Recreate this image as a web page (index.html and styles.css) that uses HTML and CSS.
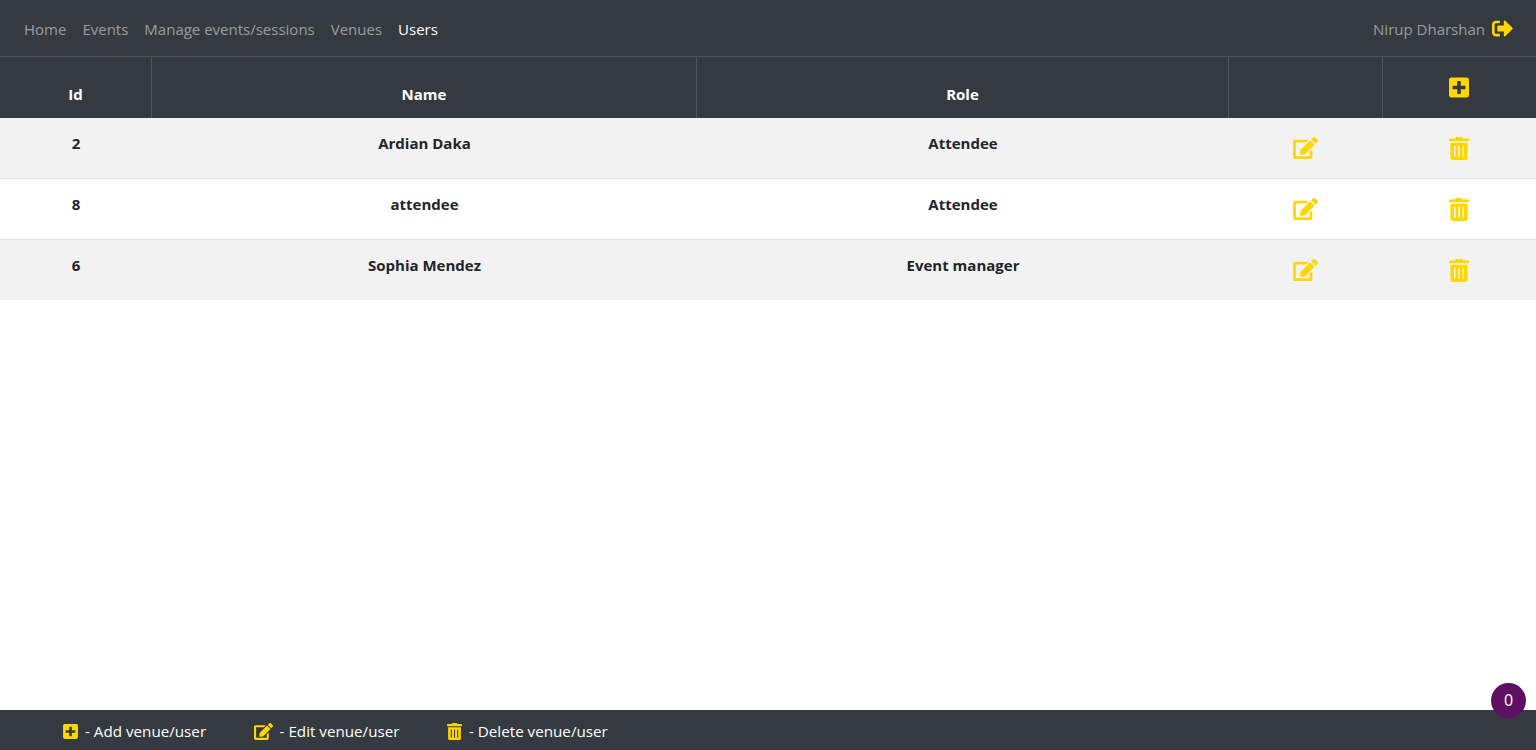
FILE: index.html
```html
<!DOCTYPE html>
<html lang="en">
<head>
    <meta charset="UTF-8">
    <meta name="viewport" content="width=device-width, initial-scale=1.0">
    <title>Users</title>
    <link rel="stylesheet" href="styles.css">
</head>
<body>
    <svg class="icon-defs" aria-hidden="true">
        <symbol id="i-add" viewBox="0 0 448 512"><path d="M400 32H48C21.5 32 0 53.5 0 80v352c0 26.5 21.5 48 48 48h352c26.5 0 48-21.5 48-48V80c0-26.5-21.5-48-48-48zm-32 252c0 6.6-5.4 12-12 12h-92v92c0 6.6-5.4 12-12 12h-56c-6.6 0-12-5.4-12-12v-92H92c-6.6 0-12-5.4-12-12v-56c0-6.6 5.4-12 12-12h92v-92c0-6.6 5.4-12 12-12h56c6.6 0 12 5.4 12 12v92h92c6.6 0 12 5.4 12 12v56z"/></symbol>
        <symbol id="i-edit" viewBox="0 0 576 512"><path d="M402.6 83.2l90.2 90.2c3.8 3.8 3.8 10 0 13.8L274.4 405.6l-92.8 10.3c-12.4 1.4-22.9-9.1-21.5-21.5l10.3-92.8L388.8 83.2c3.8-3.8 10-3.8 13.8 0zm162-22.9l-48.8-48.8c-15.2-15.2-39.9-15.2-55.2 0l-35.4 35.4c-3.8 3.8-3.8 10 0 13.8l90.2 90.2c3.8 3.8 10 3.8 13.8 0l35.4-35.4c15.2-15.3 15.2-40 0-55.2zM384 346.2V448H64V128h229.8c3.2 0 6.2-1.3 8.5-3.5l40-40c7.6-7.6 2.2-20.5-8.5-20.5H48C21.5 64 0 85.5 0 112v352c0 26.5 21.5 48 48 48h352c26.5 0 48-21.5 48-48V306.2c0-10.7-12.9-16-20.5-8.5l-40 40c-2.2 2.3-3.5 5.3-3.5 8.5z"/></symbol>
        <symbol id="i-trash" viewBox="0 0 448 512"><path d="M32 464a48 48 0 0 0 48 48h288a48 48 0 0 0 48-48V128H32zm272-256a16 16 0 0 1 32 0v224a16 16 0 0 1-32 0zm-96 0a16 16 0 0 1 32 0v224a16 16 0 0 1-32 0zm-96 0a16 16 0 0 1 32 0v224a16 16 0 0 1-32 0zM432 32H312l-9.4-18.7A24 24 0 0 0 281.1 0H166.8a23.72 23.72 0 0 0-21.4 13.3L136 32H16A16 16 0 0 0 0 48v32a16 16 0 0 0 16 16h416a16 16 0 0 0 16-16V48a16 16 0 0 0-16-16z"/></symbol>
        <symbol id="i-logout" viewBox="0 0 512 512"><path d="M497 273L329 441c-15 15-41 4.5-41-17v-96H152c-13.3 0-24-10.7-24-24v-96c0-13.3 10.7-24 24-24h136V88c0-21.4 25.9-32 41-17l168 168c9.3 9.4 9.3 24.6 0 34zM192 436v-40c0-6.6-5.4-12-12-12H96c-17.7 0-32-14.3-32-32V160c0-17.7 14.3-32 32-32h84c6.6 0 12-5.4 12-12V76c0-6.6-5.4-12-12-12H96c-53 0-96 43-96 96v192c0 53 43 96 96 96h84c6.6 0 12-5.4 12-12z"/></symbol>
    </svg>

    <nav class="navbar">
        <div class="nav-links">
            <a href="#">Home</a>
            <a href="#">Events</a>
            <a href="#">Manage events/sessions</a>
            <a href="#">Venues</a>
            <a href="#" class="active">Users</a>
        </div>
        <div class="nav-user">
            <span>Nirup Dharshan</span>
            <svg class="icon icon-logout"><use href="#i-logout"/></svg>
        </div>
    </nav>

    <main class="content">
        <table class="users">
            <colgroup>
                <col class="col-id">
                <col class="col-name">
                <col class="col-role">
                <col class="col-edit">
                <col class="col-delete">
            </colgroup>
            <thead>
                <tr>
                    <th>Id</th>
                    <th>Name</th>
                    <th>Role</th>
                    <th></th>
                    <th class="th-add"><svg class="icon icon-add"><use href="#i-add"/></svg></th>
                </tr>
            </thead>
            <tbody>
                <tr>
                    <td>2</td>
                    <td>Ardian Daka</td>
                    <td>Attendee</td>
                    <td><svg class="icon icon-edit"><use href="#i-edit"/></svg></td>
                    <td><svg class="icon icon-trash"><use href="#i-trash"/></svg></td>
                </tr>
                <tr>
                    <td>8</td>
                    <td>attendee</td>
                    <td>Attendee</td>
                    <td><svg class="icon icon-edit"><use href="#i-edit"/></svg></td>
                    <td><svg class="icon icon-trash"><use href="#i-trash"/></svg></td>
                </tr>
                <tr>
                    <td>6</td>
                    <td>Sophia Mendez</td>
                    <td>Event manager</td>
                    <td><svg class="icon icon-edit"><use href="#i-edit"/></svg></td>
                    <td><svg class="icon icon-trash"><use href="#i-trash"/></svg></td>
                </tr>
            </tbody>
        </table>
    </main>

    <footer class="legend">
        <div class="legend-item"><svg class="icon icon-small-add"><use href="#i-add"/></svg><span>- Add venue/user</span></div>
        <div class="legend-item"><svg class="icon icon-small-edit"><use href="#i-edit"/></svg><span>- Edit venue/user</span></div>
        <div class="legend-item"><svg class="icon icon-small-trash"><use href="#i-trash"/></svg><span>- Delete venue/user</span></div>
    </footer>

    <div class="badge">0</div>
</body>
</html>
```

FILE: styles.css
```css
html, body {
    height: 100%;
}
body {
    font-family: "Open Sans", "Noto Sans", sans-serif;
    font-size: 15px;
    line-height: 24px;
    color: #212529;
    background-color: #fff;
    margin: 0;
    display: flex;
    flex-direction: column;
    overflow: hidden;
}
.icon-defs {
    display: none;
}
.icon {
    fill: #ffd700;
    display: inline-block;
}

.navbar {
    height: 56px;
    flex: none;
    display: flex;
    align-items: center;
    justify-content: space-between;
    padding: 2px 23px 0 24px;
    box-sizing: border-box;
    background-color: #343a40;
}
.nav-links {
    display: flex;
    gap: 16px;
}
.nav-links a {
    color: rgba(255, 255, 255, 0.5);
    text-decoration: none;
}
.nav-links a.active {
    color: #fff;
}
.nav-user {
    display: flex;
    align-items: center;
    gap: 7px;
    color: rgba(255, 255, 255, 0.5);
}
.icon-logout {
    width: 21px;
    height: 21px;
    margin-top: -2px;
}

.content {
    flex: 1;
}
.users {
    width: 100%;
    table-layout: fixed;
    border-collapse: separate;
    border-spacing: 0;
}
.col-id { width: 152px; }
.col-name { width: 545px; }
.col-role { width: 532px; }
.col-edit { width: 154px; }
.users th {
    height: 62px;
    box-sizing: border-box;
    padding: 12px;
    text-align: center;
    vertical-align: bottom;
    font-weight: 700;
    color: #fff;
    background-color: #343a40;
    border-top: 1px solid #50565c;
    border-right: 1px solid #50565c;
}
.users th:last-child {
    border-right: 0;
}
.users .th-add {
    vertical-align: top;
    padding-top: 19px;
    line-height: 0;
}
.icon-add {
    width: 20px;
    height: 23px;
    margin-right: 2px;
}
.users td {
    height: 61px;
    box-sizing: border-box;
    padding: 13px 12px 0;
    text-align: center;
    vertical-align: top;
    font-weight: 700;
    border-bottom: 1px solid #dee2e6;
}
.users tbody tr:last-child td {
    height: 60px;
    border-bottom: 0;
}
.users tbody tr:nth-child(odd) {
    background-color: #f2f2f2;
}
.icon-edit {
    width: 25px;
    height: 22px;
    margin: 6px 2px 0 0;
}
.icon-trash {
    width: 20px;
    height: 23px;
    margin: 6px 2px 0 0;
}

.legend {
    height: 40px;
    flex: none;
    display: flex;
    align-items: center;
    padding: 2px 0 0 63px;
    box-sizing: border-box;
    gap: 47.5px;
    font-size: 15.2px;
    color: #fff;
    background-color: #343a40;
}
.legend-item {
    display: flex;
    align-items: center;
    gap: 7px;
}
.icon-small-add {
    width: 15px;
    height: 17px;
}
.icon-small-edit {
    width: 19px;
    height: 17px;
}
.icon-small-trash {
    width: 15px;
    height: 17px;
}

.badge {
    position: absolute;
    right: 10px;
    bottom: 32px;
    width: 35px;
    height: 35px;
    border-radius: 50%;
    background-color: #5f0f63;
    color: #fff;
    font-size: 16px;
    line-height: 35px;
    text-align: center;
}
```
